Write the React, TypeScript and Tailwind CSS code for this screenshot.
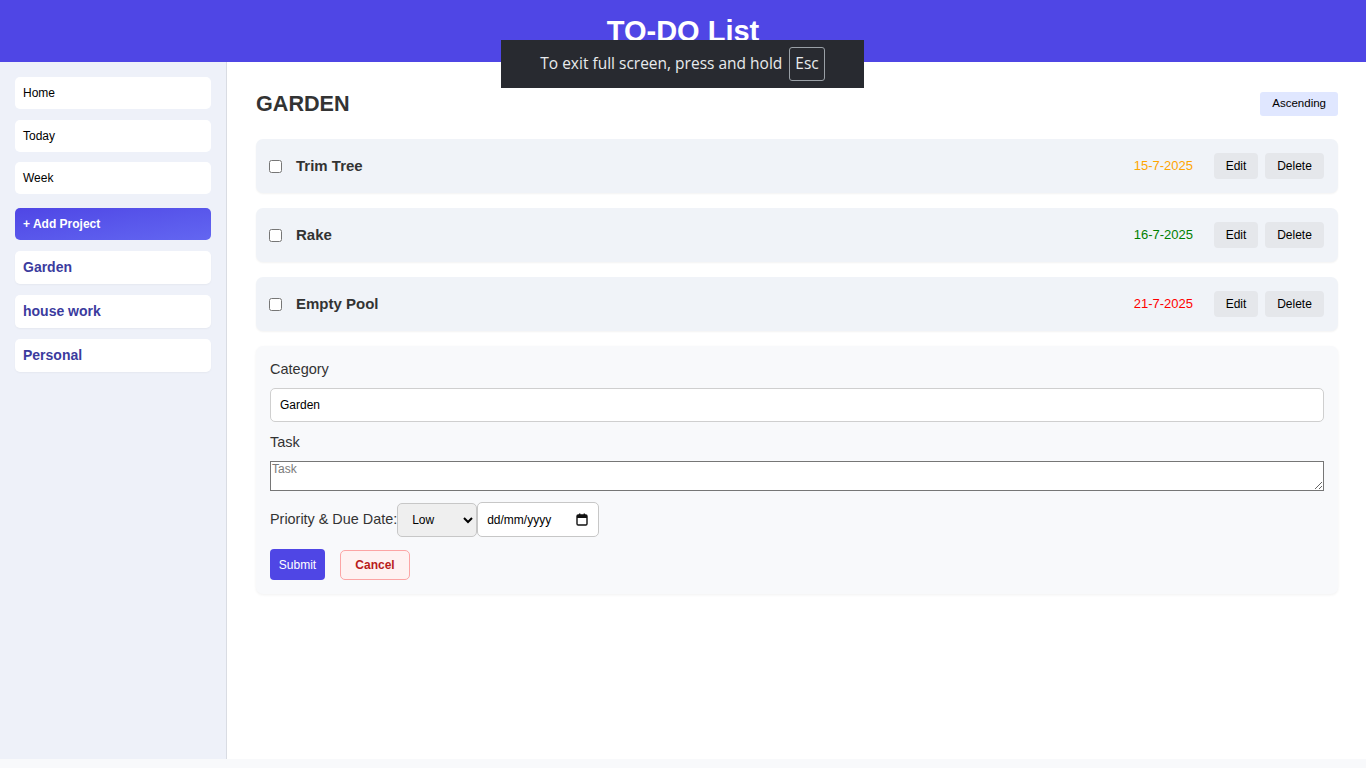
import { useState } from 'react';

type Task = { id: number; title: string; date: string; color: string };

const tasks: Task[] = [
  { id: 1, title: 'Trim Tree', date: '15-7-2025', color: 'text-[#ffa500]' },
  { id: 2, title: 'Rake', date: '16-7-2025', color: 'text-[#008000]' },
  { id: 3, title: 'Empty Pool', date: '21-7-2025', color: 'text-[#ff0000]' },
];

const projects = ['Garden', 'house work', 'Personal'];

export default function App() {
  const [checked, setChecked] = useState<Record<number, boolean>>({});

  return (
    <div className="relative min-h-screen bg-[#f8f9fb] font-['Liberation_Sans',Arial,sans-serif] text-[#333]">
      {/* Header */}
      <header className="h-[62px] bg-[#4f46e5] flex items-center justify-center">
        <h1 className="text-[29px] font-bold text-white leading-none">TO-DO List</h1>
      </header>

      {/* Fullscreen notice */}
      <div className="absolute left-[501px] top-[40px] w-[363px] h-[48px] bg-[#282a30] flex items-center justify-center gap-[7px] font-['Open_Sans','Noto_Sans',sans-serif] text-[15.5px] text-[#e8eaed]">
        <span>To exit full screen, press and hold</span>
        <span className="border border-[#9aa0a6] rounded-[3px] px-[5px] h-[34px] flex items-center">Esc</span>
      </div>

      <div className="flex h-[697px]">
        {/* Sidebar */}
        <aside className="w-[227px] shrink-0 bg-[#eef1f9] border-r border-[#d9dce3] px-[15px] pt-[15px] flex flex-col">
          {['Home', 'Today', 'Week'].map((n) => (
            <div key={n} className="h-[32px] mb-[10.5px] bg-white rounded-[5px] flex items-center px-[8px] text-[12px] text-black">
              {n}
            </div>
          ))}
          <button className="h-[32px] mt-[3.5px] mb-[11px] rounded-[5px] bg-gradient-to-br from-[#4f46e5] to-[#6366f1] text-white text-[12px] font-bold text-left px-[8px]">
            + Add Project
          </button>
          {projects.map((p) => (
            <div key={p} className="h-[33px] mb-[11px] bg-white rounded-[5px] shadow-[0_1px_2px_rgba(0,0,0,0.04)] flex items-center px-[8px] text-[14px] font-bold text-[#3b3b9e]">
              {p}
            </div>
          ))}
        </aside>

        {/* Main */}
        <main className="flex-1 bg-white pl-[29px] pr-[28px] pt-[30px]">
          <div className="flex items-center justify-between h-[24px] mb-[23px]">
            <h2 className="text-[21.6px] font-bold text-[#333]">GARDEN</h2>
            <button className="h-[24px] px-[12px] rounded-[3px] bg-[#e0e7ff] text-[11.5px] text-black">Ascending</button>
          </div>

          <div className="flex flex-col gap-[15px]">
            {tasks.map((t) => (
              <div key={t.id} className="h-[54px] bg-[#f0f3f8] rounded-[7px] shadow-[0_1px_2px_rgba(0,0,0,0.05)] flex items-center pl-[13px] pr-[14px]">
                <input
                  type="checkbox"
                  checked={!!checked[t.id]}
                  onChange={() => setChecked({ ...checked, [t.id]: !checked[t.id] })}
                  className="w-[13px] h-[13px] m-0"
                />
                <span className="ml-[14px] text-[15px] font-bold text-[#333]">{t.title}</span>
                <span className={`ml-auto text-[13px] ${t.color}`}>{t.date}</span>
                <button className="ml-[21px] w-[44px] h-[26px] rounded-[4px] bg-[#e5e7eb] text-[12px] text-black">Edit</button>
                <button className="ml-[7px] w-[59px] h-[26px] rounded-[4px] bg-[#e5e7eb] text-[12px] text-black">Delete</button>
              </div>
            ))}

            {/* Form */}
            <div className="bg-[#f8f9fb] rounded-[7px] shadow-[0_1px_3px_rgba(0,0,0,0.06)] px-[14px] pt-[14px] pb-[14px]">
              <label className="block text-[14.5px] text-[#333] leading-[18px]">Category</label>
              <input
                defaultValue="Garden"
                className="mt-[10px] w-full h-[34px] bg-white border border-[#cfcfcf] rounded-[5px] px-[9px] text-[12px] text-black outline-none"
              />
              <label className="block mt-[11px] text-[14.5px] text-[#333] leading-[18px]">Task</label>
              <textarea
                placeholder="Task"
                className="mt-[10px] block w-full h-[30px] bg-white border border-[#767676] text-[12px] placeholder:text-[#7a7a7a] px-[1px] py-0 leading-[14px]"
              />
              <div className="mt-[11px] flex items-center">
                <span className="text-[14.4px] text-[#333]">Priority &amp; Due Date:</span>
                <select className="w-[80px] h-[34px] bg-[#efefef] border border-[#c7c7c7] rounded-[5px] px-[10px] text-[12px] text-black">
                  <option>Low</option>
                  <option>Medium</option>
                  <option>High</option>
                </select>
                <div className="w-[122px] h-[35px] bg-white border border-[#c7c7c7] rounded-[5px] pl-[9px] pr-[10px] flex items-center justify-between text-[12px] text-black">
                  <span>dd/mm/yyyy</span>
                  <svg width="12" height="13" viewBox="0 0 12 13" fill="none">
                    <rect x="1" y="2" width="10" height="10" rx="1.2" stroke="#111" strokeWidth="1.4" />
                    <rect x="1" y="2" width="10" height="3" fill="#111" />
                    <rect x="3" y="0.5" width="1.4" height="2.5" fill="#111" />
                    <rect x="7.6" y="0.5" width="1.4" height="2.5" fill="#111" />
                  </svg>
                </div>
              </div>
              <div className="mt-[12px] flex items-center gap-[15px]">
                <button className="w-[55px] h-[31px] rounded-[4px] bg-[#4f46e5] text-white text-[12px]">Submit</button>
                <button className="w-[70px] h-[30px] rounded-[5px] bg-[#fef2f2] border border-[#fca5a5] text-[#b91c1c] text-[12px] font-bold">Cancel</button>
              </div>
            </div>
          </div>
        </main>
      </div>
    </div>
  );
}
